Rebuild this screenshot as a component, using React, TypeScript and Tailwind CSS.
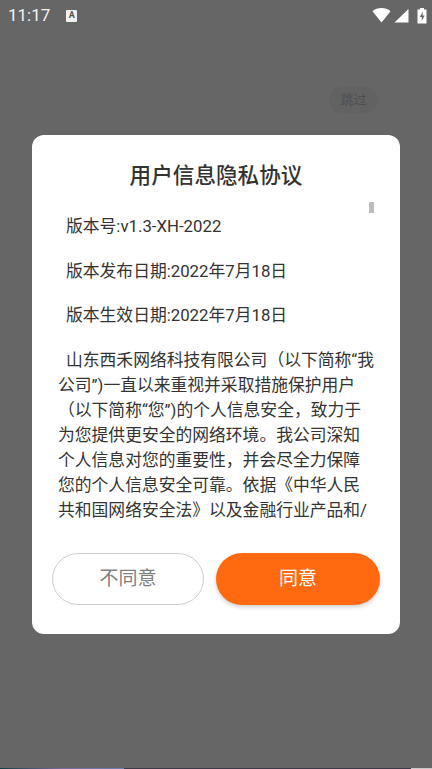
const cjk = "font-['Roboto','Noto_Sans_CJK_SC',sans-serif]";

function StatusBar() {
  return (
    <div className="flex h-[30px] items-center justify-between pl-[8px] pr-[5px] pt-[1px] text-[#f2f2f2]">
      <div className="flex items-center">
        <span className="font-['Roboto',sans-serif] text-[17px] leading-none">11:17</span>
        <div className="relative ml-[16px] flex h-[12px] w-[11px] items-center justify-center rounded-[1px] bg-[#f2f2f2]">
          <span className="font-['Roboto',sans-serif] text-[9px] font-bold leading-none text-[#555]">A</span>
        </div>
      </div>
      <div className="flex items-center gap-[3px]">
        <svg width="19" height="15" viewBox="0 0 19 15" fill="#fff">
          <path d="M0.5 3.2C3 1.2 6 0 9.5 0s6.500 1.200 9 3.200L9.500 14.500z" />
        </svg>
        <svg width="15" height="15" viewBox="0 0 15 15" fill="#fff">
          <path d="M14.500 1v13.500H0.500z" />
        </svg>
        <svg width="10" height="16" viewBox="0 0 10 16" className="ml-[5px]">
          <path fill="#fff" d="M3 0h4v1.500h2.500V15.500H0.500V1.500H3z" />
          <path fill="#666" d="M5.800 3.500 2.800 9h2v4l2.800-5.500h-2z" />
        </svg>
      </div>
    </div>
  );
}

function AgreementText() {
  return (
    <div className="h-[309px] overflow-hidden text-[16.8px] leading-[25px] text-[#333]">
      <p className="pl-[8px]">版本号:v1.3-XH-2022</p>
      <p className="mt-[19.6px] pl-[8px]">版本发布日期:2022年7月18日</p>
      <p className="mt-[19.6px] pl-[8px]">版本生效日期:2022年7月18日</p>
      <p className="mt-[19.6px] whitespace-nowrap">
        <span className="pl-[8px]">山东西禾网络科技有限公司（以下简称“我</span>
        <br />
        公司”)一直以来重视并采取措施保护用户
        <br />
        （以下简称“您”)的个人信息安全，致力于
        <br />
        为您提供更安全的网络环境。我公司深知
        <br />
        个人信息对您的重要性，并会尽全力保障
        <br />
        您的个人信息安全可靠。依据《中华人民
        <br />
        共和国网络安全法》以及金融行业产品和/
      </p>
    </div>
  );
}

export default function App() {
  return (
    <div className={`relative flex h-[769px] w-[432px] flex-col overflow-hidden bg-[#666666] ${cjk}`}>
      <StatusBar />
      <div className="mr-[54px] mt-[57px] flex h-[26px] w-[49px] items-center justify-center self-end rounded-full bg-[#626262] text-[13px] text-[#4f4f4f]">
        跳过
      </div>
      <div className="relative ml-[32px] mt-[22px] flex h-[499px] w-[368px] flex-col rounded-[12px] bg-white px-[20px]">
        <h1 className="pt-[25px] text-center text-[21.6px] font-medium leading-[32px] text-[#333]">用户信息隐私协议</h1>
        <div className="absolute right-[26px] top-[67px] h-[11px] w-[5px] bg-[#bdbdbd]" />
        <div className="mt-[22px] pl-[6px]">
          <AgreementText />
        </div>
        <div className="mt-[30px] flex gap-[12px]">
          <button className="flex h-[52px] w-[152px] items-center justify-center rounded-full border border-[#cccccc] bg-white pt-[1px] text-[19px] text-[#808080]">
            不同意
          </button>
          <button className="flex h-[52px] w-[164px] items-center justify-center rounded-full bg-[#ff6a10] pt-[1px] text-[19px] text-white shadow-[0_2px_4px_rgba(0,0,0,0.2)]">
            同意
          </button>
        </div>
      </div>
      <div className="absolute bottom-0 left-0 flex h-[1px] w-full">
        <div className="w-[124px] bg-gradient-to-r from-[#0f3f45] via-[#7a6a9a] to-[#6a80b0]" />
        <div className="flex-1 bg-[#3f3a48]" />
        <div className="w-[21px] bg-[#c8c8c8]" />
      </div>
    </div>
  );
}
